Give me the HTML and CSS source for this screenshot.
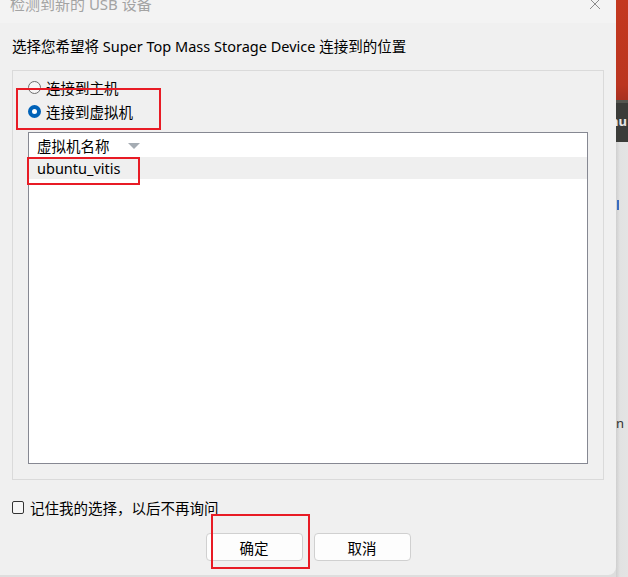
FILE: index.html
```html
<!DOCTYPE html>
<html lang="zh-CN">

<head>
    <meta charset="UTF-8">
    <meta name="viewport" content="width=device-width, initial-scale=1.0">
    <title>检测到新的 USB 设备</title>
    <link rel="stylesheet" href="styles.css">
</head>

<body>
    <div class="screen">
        <div class="dialog">
            <div class="titlebar">
                <span class="title">检测到新的 USB 设备</span>
                <svg class="close" width="12" height="12" viewBox="0 0 12 12">
                    <path d="M1 1 L11 11 M11 1 L1 11" stroke="#8c8c8c" stroke-width="1" fill="none" />
                </svg>
            </div>

            <div class="content">
                <p class="prompt">选择您希望将 Super Top Mass Storage Device 连接到的位置</p>

                <div class="group">
                    <label class="option"><span class="radio"></span>连接到主机</label>
                    <label class="option"><span class="radio checked"></span>连接到虚拟机</label>

                    <div class="list">
                        <div class="list-head">
                            <span>虚拟机名称</span>
                            <span class="sort"></span>
                        </div>
                        <div class="list-row">ubuntu_vitis</div>
                    </div>
                </div>

                <label class="remember"><span class="checkbox"></span>记住我的选择，以后不再询问</label>

                <div class="actions">
                    <button class="btn">确定</button>
                    <button class="btn">取消</button>
                </div>
            </div>

            <!-- red annotation boxes -->
            <div class="mark mark-radio"></div>
            <div class="mark mark-row"></div>
            <div class="mark mark-ok"></div>
        </div>

        <div class="backdrop">
            <div class="bg-red"></div>
            <div class="bg-bar"><span>nu</span></div>
            <div class="bg-page">
                <span class="bg-l"></span>
                <span class="bg-n">n</span>
            </div>
        </div>
    </div>
</body>

</html>
```

FILE: styles.css
```css
body {
    margin: 0;
    padding: 0;
    background-color: #dedede;
    font-family: "Noto Sans", "Noto Sans CJK SC", sans-serif;
    font-size: 14.5px;
    color: #000;
    overflow: hidden;
}

.screen {
    display: flex;
    width: 628px;
    height: 577px;
}

.dialog {
    position: relative;
    width: 616px;
    height: 575px;
    flex-shrink: 0;
    background-color: #f0f0f0;
    border-bottom-right-radius: 8px;
    overflow: hidden;
}

.titlebar {
    display: flex;
    justify-content: space-between;
    height: 23px;
    background-color: #f3f3f3;
    padding: 0 15px 0 10px;
    box-sizing: border-box;
}

.title {
    display: block;
    margin-top: -6px;
    line-height: 20px;
    font-size: 15px;
    color: #a3a3a3;
}

.close {
    margin-top: -2px;
}

.content {
    padding: 0 12px;
}

.prompt {
    margin: 13px 0 0;
    line-height: 20px;
}

.group {
    margin-top: 14px;
    height: 410px;
    box-sizing: border-box;
    border: 1px solid #dadada;
    padding: 4px 15px 0;
}

.option {
    display: flex;
    align-items: center;
    height: 24px;
}

.radio {
    width: 13px;
    height: 13px;
    box-sizing: border-box;
    border: 1px solid #6e6e6e;
    border-radius: 50%;
    background-color: #f6f6f6;
    margin-right: 5px;
}

.radio.checked {
    border: 4px solid #0062b8;
    background-color: #fff;
}

.list {
    margin-top: 9px;
    height: 332px;
    box-sizing: border-box;
    border: 1px solid #868892;
    background-color: #fff;
}

.list-head {
    display: flex;
    align-items: center;
    height: 24px;
    padding-left: 8px;
}

.sort {
    margin-left: 18px;
    margin-top: 2px;
    width: 0;
    height: 0;
    border-left: 6px solid transparent;
    border-right: 6px solid transparent;
    border-top: 6px solid #a5acb3;
}

.list-row {
    height: 22px;
    line-height: 22px;
    padding-left: 8px;
    background-color: #efefef;
}

.remember {
    display: flex;
    align-items: center;
    margin-top: 17px;
    height: 20px;
}

.checkbox {
    width: 12px;
    height: 13px;
    box-sizing: border-box;
    border: 1px solid #333;
    border-radius: 2px;
    background-color: #f6f6f6;
    margin-right: 6px;
}

.actions {
    display: flex;
    justify-content: center;
    gap: 11px;
    margin-top: 16px;
}

.btn {
    width: 97px;
    height: 28px;
    border: 1px solid #d0d0d0;
    border-radius: 4px;
    background-color: #fdfdfd;
    font-family: inherit;
    font-size: 14.5px;
    color: #000;
    padding: 0;
}

.mark {
    position: absolute;
    box-sizing: border-box;
    border: 2px solid #e81b25;
}

.mark-radio {
    left: 16px;
    top: 88px;
    width: 145px;
    height: 42px;
}

.mark-row {
    left: 27px;
    top: 157px;
    width: 113px;
    height: 28px;
}

.mark-ok {
    left: 211px;
    top: 514px;
    width: 99px;
    height: 55px;
}

.backdrop {
    display: flex;
    flex-direction: column;
    width: 12px;
    overflow: hidden;
}

.bg-red {
    height: 100px;
    background: linear-gradient(#c4381f, #bb3520 85%, #a83020);
}

.bg-bar {
    height: 42px;
    background-color: #3b3c39;
    border-top: 3px solid #555650;
    box-sizing: border-box;
    font-size: 13px;
    font-weight: bold;
    color: #e6e6e6;
    line-height: 36px;
    white-space: nowrap;
}

.bg-bar span {
    display: block;
    margin-left: -6px;
}

.bg-page {
    flex: 1;
    display: flex;
    flex-direction: column;
    background: linear-gradient(90deg, #cfcfcf, #e2e2e2 4px, #e4e4e4);
}

.bg-l {
    width: 2px;
    height: 10px;
    margin: 58px 0 0 1px;
    background-color: #3a6cc0;
}

.bg-n {
    margin-top: 206px;
    margin-left: 0;
    font-size: 13px;
    line-height: 14px;
    color: #333;
}
```
